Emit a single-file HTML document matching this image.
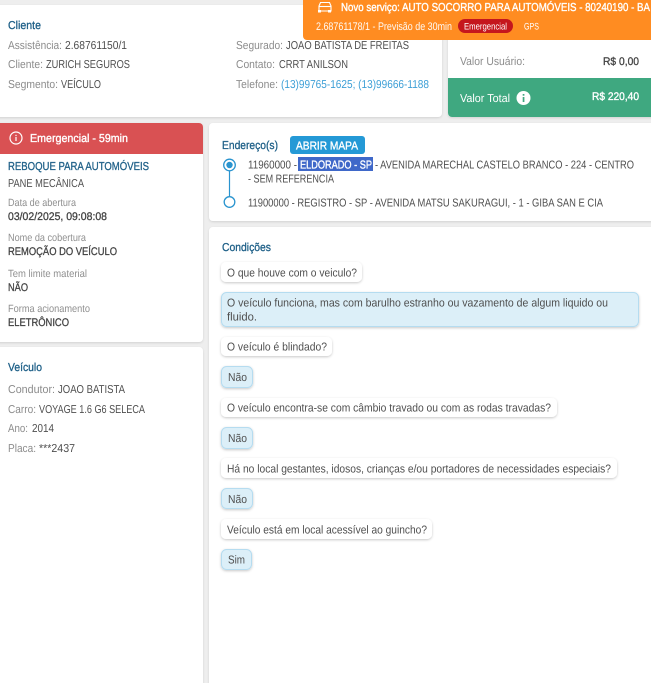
<!DOCTYPE html>
<html lang="pt">
<head>
<meta charset="utf-8">
<title>Serviço</title>
<style>
html,body{margin:0;padding:0;width:651px;height:683px;overflow:hidden;background:#eeeeee}
svg{position:absolute;left:0;top:0;display:block}
text{font-family:"Liberation Sans",sans-serif;font-size:11.5px;fill:#555;text-rendering:geometricPrecision}
.l{fill:#8c8c8c}
.v{fill:#4f4f4f}
.h{fill:#1f6088;font-size:11.5px;stroke:#1f6088;stroke-width:.3px}
.s{font-size:10.5px;fill:#8f8f8f}
.b{fill:#444;font-size:11px;stroke:#444;stroke-width:.3px}
.w{fill:#fff;stroke:#fff;stroke-width:.35px}
.card{fill:#fff;filter:url(#sh)}
.q{fill:#fff;filter:url(#sc)}
.a{fill:#dceff8;stroke:#b5dcf0;stroke-width:1;filter:url(#sc)}
</style>
</head>
<body>
<svg width="651" height="683" viewBox="0 0 651 683" xmlns="http://www.w3.org/2000/svg">
<defs>
<filter id="sh" x="-5%" y="-5%" width="110%" height="110%"><feDropShadow dx="0" dy="1" stdDeviation="1" flood-color="#000" flood-opacity=".12"/></filter>
<filter id="sc" x="-10%" y="-30%" width="120%" height="170%"><feDropShadow dx="0" dy="1" stdDeviation="1.2" flood-color="#000" flood-opacity=".22"/></filter>
</defs>

<!-- Cliente card -->
<rect class="card" x="-6" y="5" width="448" height="112" rx="4"/>
<text class="h" x="8" y="29" textLength="33" lengthAdjust="spacingAndGlyphs">Cliente</text>
<text class="l" x="8" y="49" textLength="54" lengthAdjust="spacingAndGlyphs">Assistência:</text>
<text class="v" x="65" y="49" textLength="62" lengthAdjust="spacingAndGlyphs">2.68761150/1</text>
<text class="l" x="8" y="68" textLength="35" lengthAdjust="spacingAndGlyphs">Cliente:</text>
<text class="v" x="46" y="68" textLength="84" lengthAdjust="spacingAndGlyphs">ZURICH SEGUROS</text>
<text class="l" x="8" y="88" textLength="50" lengthAdjust="spacingAndGlyphs">Segmento:</text>
<text class="v" x="61" y="88" textLength="40" lengthAdjust="spacingAndGlyphs">VEÍCULO</text>
<text class="l" x="236" y="49" textLength="47" lengthAdjust="spacingAndGlyphs">Segurado:</text>
<text class="v" x="286" y="49" textLength="123" lengthAdjust="spacingAndGlyphs">JOAO BATISTA DE FREITAS</text>
<text class="l" x="236" y="68" textLength="39" lengthAdjust="spacingAndGlyphs">Contato:</text>
<text class="v" x="279" y="68" textLength="69" lengthAdjust="spacingAndGlyphs">CRRT ANILSON</text>
<text class="l" x="236" y="88" textLength="42" lengthAdjust="spacingAndGlyphs">Telefone:</text>
<text x="281" y="88" textLength="148" lengthAdjust="spacingAndGlyphs" style="fill:#3d9fd6">(13)99765-1625; (13)99666-1188</text>

<!-- Valores card -->
<rect class="card" x="448" y="20" width="210" height="97" rx="4"/>
<path d="M448 78H651V117H452a4 4 0 0 1-4-4Z" fill="#3fa880"/>
<text class="l" x="460" y="65" textLength="65" lengthAdjust="spacingAndGlyphs">Valor Usuário:</text>
<text class="b" x="603" y="65" textLength="36" lengthAdjust="spacingAndGlyphs">R$ 0,00</text>
<text x="460" y="102" textLength="50" lengthAdjust="spacingAndGlyphs" style="fill:#fff">Valor Total</text>
<circle cx="523.500" cy="98" r="7" fill="#fff"/>
<rect x="522.700" y="97" width="1.700" height="5" fill="#3fa880"/>
<rect x="522.700" y="94" width="1.700" height="1.700" fill="#3fa880"/>
<text class="w" x="592" y="100" textLength="47" lengthAdjust="spacingAndGlyphs" style="font-size:11px">R$ 220,40</text>

<!-- Notificação laranja -->
<path d="M303 0H651V40H307a4 4 0 0 1-4-4Z" fill="#ff8c21"/>
<g fill="none" stroke="#fff" stroke-width="1.100">
<path d="M320.500 2.500h9l1.500 3.500v5h-12V6Z"/>
<path d="M319 6.500h12"/>
</g>
<rect x="318" y="10" width="3" height="2.500" fill="#fff"/>
<rect x="328" y="10" width="3" height="2.500" fill="#fff"/>
<text class="w" x="341" y="11" textLength="309" lengthAdjust="spacingAndGlyphs">Novo serviço: AUTO SOCORRO PARA AUTOMÓVEIS - 80240190 - BA</text>
<text x="316" y="30" textLength="136" lengthAdjust="spacingAndGlyphs" style="fill:#fff;font-size:11px;opacity:.95">2.68761178/1 - Previsão de 30min</text>
<rect x="458" y="19" width="55" height="14" rx="7" fill="#c5161d"/>
<text x="464" y="29.500" textLength="43" lengthAdjust="spacingAndGlyphs" style="fill:#fff;font-size:9.5px">Emergencial</text>
<text x="524" y="29.500" textLength="15" lengthAdjust="spacingAndGlyphs" style="fill:#fff;font-size:9.5px">GPS</text>

<!-- Serviço card -->
<rect class="card" x="-6" y="123" width="209" height="219" rx="4"/>
<path d="M0 123H199a4 4 0 0 1 4 4V154H0Z" fill="#d95153"/>
<circle cx="16" cy="138" r="6" fill="none" stroke="#fff" stroke-width="1.200"/>
<rect x="15.400" y="137" width="1.200" height="4" fill="#fff"/>
<rect x="15.400" y="134.800" width="1.200" height="1.300" fill="#fff"/>
<text class="w" x="30" y="142" textLength="98" lengthAdjust="spacingAndGlyphs">Emergencial - 59min</text>
<text class="h" x="8" y="170" textLength="141" lengthAdjust="spacingAndGlyphs">REBOQUE PARA AUTOMÓVEIS</text>
<text class="v" x="8" y="187" textLength="76" lengthAdjust="spacingAndGlyphs">PANE MECÂNICA</text>
<text class="s" x="8" y="206" textLength="68" lengthAdjust="spacingAndGlyphs">Data de abertura</text>
<text class="b" x="8" y="220" textLength="99" lengthAdjust="spacingAndGlyphs">03/02/2025, 09:08:08</text>
<text class="s" x="8" y="241" textLength="78" lengthAdjust="spacingAndGlyphs">Nome da cobertura</text>
<text class="b" x="8" y="255" textLength="109" lengthAdjust="spacingAndGlyphs">REMOÇÃO DO VEÍCULO</text>
<text class="s" x="8" y="277" textLength="79" lengthAdjust="spacingAndGlyphs">Tem limite material</text>
<text class="b" x="8" y="291" textLength="20" lengthAdjust="spacingAndGlyphs">NÃO</text>
<text class="s" x="8" y="312" textLength="82" lengthAdjust="spacingAndGlyphs">Forma acionamento</text>
<text class="b" x="8" y="326" textLength="61" lengthAdjust="spacingAndGlyphs">ELETRÔNICO</text>

<!-- Veículo card -->
<rect class="card" x="-6" y="347" width="209" height="345" rx="4"/>
<text class="h" x="8" y="371" textLength="34" lengthAdjust="spacingAndGlyphs">Veículo</text>
<text class="l" x="8" y="393" textLength="47" lengthAdjust="spacingAndGlyphs">Condutor:</text>
<text class="v" x="58" y="393" textLength="67" lengthAdjust="spacingAndGlyphs">JOAO BATISTA</text>
<text class="l" x="8" y="413" textLength="28" lengthAdjust="spacingAndGlyphs">Carro:</text>
<text class="v" x="39" y="413" textLength="106" lengthAdjust="spacingAndGlyphs">VOYAGE 1.6 G6 SELECA</text>
<text class="l" x="8" y="432" textLength="20" lengthAdjust="spacingAndGlyphs">Ano:</text>
<text class="v" x="32" y="432" textLength="22" lengthAdjust="spacingAndGlyphs">2014</text>
<text class="l" x="8" y="452" textLength="28" lengthAdjust="spacingAndGlyphs">Placa:</text>
<text class="v" x="39" y="452" textLength="36" lengthAdjust="spacingAndGlyphs">***2437</text>

<!-- Endereços card -->
<rect class="card" x="209" y="123" width="450" height="98" rx="4"/>
<text class="h" x="222" y="149" textLength="56" lengthAdjust="spacingAndGlyphs">Endereço(s)</text>
<rect x="290" y="136" width="75" height="18" rx="3" fill="#2499d6"/>
<text class="w" x="296" y="149.500" textLength="62" lengthAdjust="spacingAndGlyphs">ABRIR MAPA</text>
<path d="M229.500 171V197" stroke="#2a94cf" stroke-width="1.200"/>
<circle cx="229.500" cy="165" r="5.800" fill="#fff" stroke="#2a94cf" stroke-width="1.300"/>
<circle cx="229.500" cy="165" r="3.200" fill="#2a94cf"/>
<circle cx="229.500" cy="202" r="5.300" fill="#fff" stroke="#2a94cf" stroke-width="1.300"/>
<text class="v" x="248" y="168.500" textLength="49" lengthAdjust="spacingAndGlyphs">11960000 -</text>
<rect x="298" y="157" width="75" height="14" fill="#3f68c9"/>
<text class="w" x="300" y="168.500" textLength="72" lengthAdjust="spacingAndGlyphs">ELDORADO - SP</text>
<text class="v" x="375" y="168.500" textLength="259" lengthAdjust="spacingAndGlyphs">- AVENIDA MARECHAL CASTELO BRANCO - 224 - CENTRO</text>
<text class="v" x="248" y="182.500" textLength="86" lengthAdjust="spacingAndGlyphs">- SEM REFERENCIA</text>
<text class="v" x="248" y="206.300" textLength="355" lengthAdjust="spacingAndGlyphs">11900000 - REGISTRO - SP - AVENIDA MATSU SAKURAGUI, - 1 - GIBA SAN E CIA</text>

<!-- Condições card -->
<rect class="card" x="209" y="227" width="450" height="465" rx="4"/>
<text class="h" x="222" y="251" textLength="49" lengthAdjust="spacingAndGlyphs">Condições</text>

<rect class="q" x="221" y="262" width="141" height="20" rx="5"/>
<text class="v" x="227" y="276.300" textLength="130" lengthAdjust="spacingAndGlyphs">O que houve com o veiculo?</text>

<rect class="a" x="221.500" y="292.500" width="417" height="34" rx="5"/>
<text class="v" x="227" y="306.500" textLength="381" lengthAdjust="spacingAndGlyphs">O veículo funciona, mas com barulho estranho ou vazamento de algum liquido ou</text>
<text class="v" x="227" y="320.500" textLength="30" lengthAdjust="spacingAndGlyphs">fluido.</text>

<rect class="q" x="221" y="337" width="111" height="19" rx="5"/>
<text class="v" x="227" y="350.500" textLength="100" lengthAdjust="spacingAndGlyphs">O veículo é blindado?</text>

<rect class="a" x="221.500" y="366.500" width="31" height="21" rx="5"/>
<text class="v" x="228" y="381" textLength="19" lengthAdjust="spacingAndGlyphs">Não</text>

<rect class="q" x="221" y="398" width="336" height="19" rx="5"/>
<text class="v" x="227" y="411.500" textLength="324" lengthAdjust="spacingAndGlyphs">O veículo encontra-se com câmbio travado ou com as rodas travadas?</text>

<rect class="a" x="221.500" y="427.500" width="31" height="21" rx="5"/>
<text class="v" x="228" y="442" textLength="19" lengthAdjust="spacingAndGlyphs">Não</text>

<rect class="q" x="221" y="458" width="396" height="20" rx="5"/>
<text class="v" x="227" y="472.300" textLength="384" lengthAdjust="spacingAndGlyphs">Há no local gestantes, idosos, crianças e/ou portadores de necessidades especiais?</text>

<rect class="a" x="221.500" y="488.500" width="31" height="20" rx="5"/>
<text class="v" x="228" y="503" textLength="19" lengthAdjust="spacingAndGlyphs">Não</text>

<rect class="q" x="221" y="519" width="211" height="20" rx="5"/>
<text class="v" x="227" y="533.300" textLength="200" lengthAdjust="spacingAndGlyphs">Veículo está em local acessível ao guincho?</text>

<rect class="a" x="221.500" y="549.500" width="30" height="20" rx="5"/>
<text class="v" x="228" y="563.500" textLength="17" lengthAdjust="spacingAndGlyphs">Sim</text>
</svg>
</body>
</html>
